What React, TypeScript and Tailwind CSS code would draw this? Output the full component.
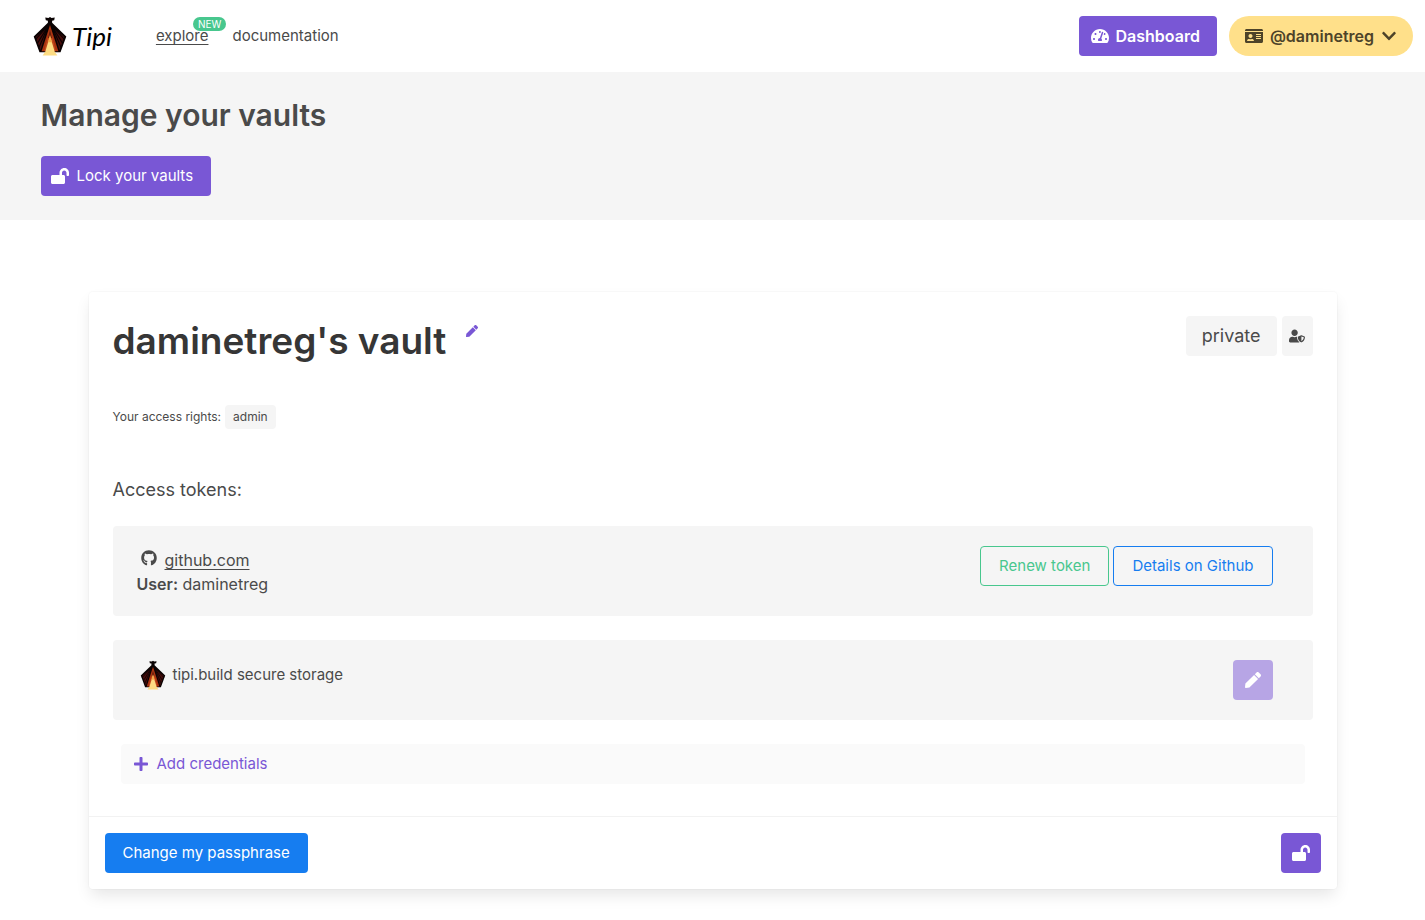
import type { ReactNode } from "react";
import {
  FaChevronDown,
  FaGithub,
  FaIdCard,
  FaLockOpen,
  FaPen,
  FaPlus,
  FaTachometerAlt,
  FaUserShield,
} from "react-icons/fa";

function TipiIcon({ className }: { className: string }) {
  return (
    <svg viewBox="0 0 66 76" className={className} aria-hidden="true">
      <path d="m24 3 6 1 3-2 3 2 6-1-1 5-4 1v4l27 26-11 30H13L2 39l27-26V9l-4-1z" fill="#0a0303" />
      <path d="M28 21 6 40l9 25zM38 21l22 19-9 25z" fill="#4a0d0b" />
      <path d="M30 18 9 52M30 18 6 44M30 18 12 60M36 18l21 34M36 18l24 26M36 18l18 42" stroke="#0a0303" strokeWidth="2" fill="none" />
      <path d="M33 17 17 67h9l7-30 7 30h9z" fill="#a93210" />
      <path d="M33 22 22 67h4l7-24 7 24h4z" fill="#c2481b" />
      <path d="m33 24-4 18h8z" fill="#6e1d0c" />
      <path d="m33 38-9 30-5 7h28l-5-7z" fill="#fddc83" />
      <path d="m33 36-4 14h8z" fill="#f5a94a" />
    </svg>
  );
}

function TokenBox({ children, actions }: { children: ReactNode; actions: ReactNode }) {
  return (
    <li className="flex items-start justify-between rounded bg-[#f5f5f5] py-5 pr-10 pl-6">
      {children}
      <div className="flex gap-1">{actions}</div>
    </li>
  );
}

export default function App() {
  return (
    <div className="min-h-screen bg-white font-['Inter',sans-serif] text-[15px] leading-6 text-[#4a4a4a]">
      <header className="flex h-[72px] items-center justify-between pr-3 pl-8">
        <div className="flex items-center">
          <a href="#home" className="flex items-center gap-1 text-black" aria-label="Tipi">
            <TipiIcon className="h-10 w-9" />
            <span className="font-['Lato',sans-serif] text-[26px] italic">Tipi</span>
          </a>
          <nav className="ml-11 flex gap-6">
            <a href="#explore" className="relative underline underline-offset-[3px]">
              explore
              <span className="absolute -top-[7px] left-[37px] rounded-full bg-[#48c78e] px-[5px] text-[10px] leading-[14px] text-white">
                NEW
              </span>
            </a>
            <a href="#documentation">documentation</a>
          </nav>
        </div>
        <div className="flex gap-3">
          <button className="flex h-10 items-center gap-1.5 rounded bg-[#7957d5] pr-[17px] pl-3 text-base font-semibold text-white">
            <FaTachometerAlt size={18} />
            Dashboard
          </button>
          <button className="flex h-10 items-center gap-[7px] rounded-full bg-[#ffe08a] px-4 text-base font-semibold text-[#4d4329]">
            <FaIdCard size={18} />
            @daminetreg
            <FaChevronDown size={16} />
          </button>
        </div>
      </header>

      <section className="bg-[#f5f5f5] py-6">
        <div className="mx-auto max-w-[1344px]">
          <h1 className="text-[30px] leading-[38px] font-semibold">Manage your vaults</h1>
          <button className="mt-[22px] flex h-10 items-center gap-2 rounded bg-[#7957d5] pr-[18px] pl-[10px] text-white">
            <FaLockOpen size={18} />
            Lock your vaults
          </button>
        </div>
      </section>

      <main className="mx-auto max-w-[1344px] px-12 pt-[72px] pb-8">
        <article className="rounded shadow-[0_8px_16px_-2px_rgba(10,10,10,0.1),0_0_0_1px_rgba(10,10,10,0.02)]">
          <div className="px-6 pt-6 pb-8">
            <div className="flex items-start justify-between">
              <div className="flex gap-5">
                <h2 className="text-[37px] leading-[49px] font-semibold text-[#363636]">daminetreg&apos;s vault</h2>
                <button className="mt-[7px] h-4 text-[#7957d5]" aria-label="Rename vault">
                  <FaPen size={12} />
                </button>
              </div>
              <div className="flex gap-[5px]">
                <span className="flex h-10 items-center rounded bg-[#f5f5f5] px-4 text-lg">private</span>
                <button className="flex h-10 w-[31px] items-center justify-center rounded bg-[#f5f5f5]" aria-label="Manage access">
                  <FaUserShield size={16} />
                </button>
              </div>
            </div>
            <p className="mt-10 flex items-center gap-1 text-xs leading-6">
              Your access rights:
              <span className="rounded bg-[#f5f5f5] px-2">admin</span>
            </p>
            <h3 className="mt-12 text-lg leading-[26px]">Access tokens:</h3>
            <ul className="mt-[23px] flex flex-col gap-6">
              <TokenBox
                actions={
                  <>
                    <button className="h-10 rounded border border-[#48c78e] px-[18px] text-[#48c78e]">Renew token</button>
                    <button className="h-10 rounded border border-[#167df0] px-[18px] text-[#167df0]">Details on Github</button>
                  </>
                }
              >
                <div className="pt-0.5 text-base">
                  <div className="flex items-start gap-2 pl-1">
                    <FaGithub size={16} className="mt-0.5" />
                    <a href="#github" className="underline underline-offset-[3px]">github.com</a>
                  </div>
                  <div>
                    <strong className="font-semibold">User:</strong> daminetreg
                  </div>
                </div>
              </TokenBox>
              <TokenBox
                actions={
                  <button disabled className="flex size-10 items-center justify-center rounded bg-[#b7a5e5] text-white" aria-label="Edit storage">
                    <FaPen size={16} />
                  </button>
                }
              >
                <div className="flex items-center gap-1.5 pl-0.5">
                  <TipiIcon className="h-[30px] w-7" />
                  tipi.build secure storage
                </div>
              </TokenBox>
            </ul>
            <button className="mx-2 mt-6 flex h-10 w-[calc(100%-16px)] items-center gap-2 rounded bg-[#fafafa] px-3 text-[#7957d5]">
              <FaPlus size={16} />
              Add credentials
            </button>
          </div>
          <footer className="flex justify-between border-t border-[#f2f2f2] p-4">
            <button className="h-10 rounded bg-[#167df0] px-[18px] text-white">Change my passphrase</button>
            <button className="flex size-10 items-center justify-center rounded bg-[#7957d5] text-white" aria-label="Lock vault">
              <FaLockOpen size={18} />
            </button>
          </footer>
        </article>
      </main>
    </div>
  );
}
